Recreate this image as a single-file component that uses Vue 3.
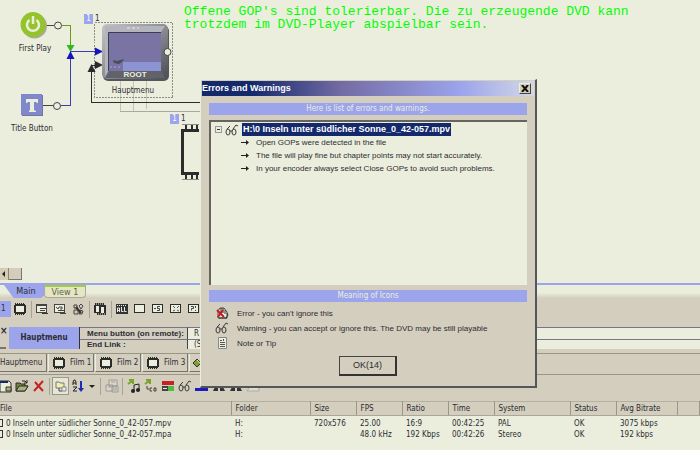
<script setup>
import { ref } from 'vue'

const details = [
  'Open GOPs were detected in the file',
  'The file will play fine but chapter points may not start accurately.',
  'In your encoder always select Close GOPs to avoid such problems.'
]
const legend = [
  { icon: 'error', text: "Error - you can't ignore this" },
  { icon: 'glasses', text: 'Warning - you can accept or ignore this. The DVD may be still playable' },
  { icon: 'note', text: 'Note or Tip' }
]
const menuTools = [
  { icon: 'film', label: 'Movie' }, { sep: true },
  { icon: 'list', label: 'Menu list' }, { icon: 'listp', label: 'Playlist' }, { icon: 'disc', label: 'Disc' }, { sep: true },
  { icon: 'filmgroup', label: 'Group' }, { sep: true },
  { icon: 'all', label: 'All' }, { icon: 'box', label: 'Blank' }, { icon: 'boxs', label: 'Single' },
  { icon: 'boxx', label: 'Cross' }, { icon: 'boxq', label: 'Query' }
]
const films = ['Film 1', 'Film 2', 'Film 3']
const fileTools = [
  { icon: 'new', label: 'New' }, { icon: 'open', label: 'Open' }, { icon: 'delete', label: 'Delete' }, { sep: true },
  { icon: 'tree', label: 'Tree', on: true }, { icon: 'sort', label: 'Sort' }, { icon: 'drop', label: 'Sort options', slim: true }, { sep: true },
  { icon: 'copy', label: 'Copy' }, { sep: true }, { icon: 'audio', label: 'Audio' }, { icon: 'ac3', label: 'Subtitle' },
  { icon: 'bars', label: 'Bars' }, { icon: 'glasses', label: 'Preview' }, { icon: 'blue', label: 'Color' },
  { icon: 'binoc', label: 'Find' }, { icon: 'binoc', label: 'Find next' }, { icon: 'pale', label: 'Properties' }
]
const columns = ['File', 'Folder', 'Size', 'FPS', 'Ratio', 'Time', 'System', 'Status', 'Avg Bitrate', '']
const files = [
  ['0 Inseln unter südlicher Sonne_0_42-057.mpv', 'H:', '720x576', '25.00', '16:9', '00:42:25', 'PAL', 'OK', '3075 kbps', ''],
  ['0 Inseln unter südlicher Sonne_0_42-057.mpa', 'H:', '', '48.0 kHz', '192 Kbps', '00:42:26', 'Stereo', 'OK', '192 kbps', '']
]
const remote = ref('R')
const endLink = ref('(S')
</script>

<template>
  <div class="app">
    <svg class="sprite" aria-hidden="true">
      <symbol id="film" viewBox="0 0 14 14"><path d="M2 1h10v2h1v8h-1v2H2v-2H1V3h1z" fill="#2c2c2c"/><rect x="3" y="4" width="8" height="6" fill="#ebeedc"/><path d="M3 1.500h9M3 12.500h9" stroke="#d4cdb4" stroke-dasharray="1 1"/></symbol>
      <symbol id="list" viewBox="0 0 14 14"><rect x="1.500" y="2.500" width="10" height="8" fill="#ebeedc" stroke="#444"/><path d="M2 3.500h9M5 6.500h6M5 8.500h5" stroke="#444"/><path d="M7 11.500h6" stroke="#333"/></symbol>
      <symbol id="listp" viewBox="0 0 14 14"><rect x="1.500" y="2.500" width="10" height="8" fill="#ebeedc" stroke="#444"/><path d="M3 5l2 2 1-2h3v2H7M5 8.500h7M7 11.500h6" fill="none" stroke="#444"/></symbol>
      <symbol id="disc" viewBox="0 0 14 14"><path d="M3 3h3v3H3zM8 4l2-2 2 2-2 3zM3 8h4v4H3zM9 8l3 1-1 3H8z" fill="#d4cdb4" stroke="#444"/><path d="M5 5l5 6" stroke="#333" stroke-width="2"/></symbol>
      <symbol id="filmgroup" viewBox="0 0 14 14"><path d="M2 1h9v2h2v10H4v-2H1V3h1z" fill="#2c2c2c"/><path d="M3 4h3v6H3zM8 5h3v6H8z" fill="#ebeedc"/><path d="M3 2h8M5 12h8" stroke="#ebeedc" stroke-dasharray="1 1"/></symbol>
      <symbol id="all" viewBox="0 0 14 14"><path d="M1 2h12v10H1z" fill="#333"/><path d="M2.500 10V6h2v4M3 8.500h2M6.500 5v4.500h2M9.500 5v4.500h2" fill="none" stroke="#ebeedc"/><path d="M2 3.500h10" stroke="#ebeedc" stroke-dasharray="1 1"/></symbol>
      <symbol id="box" viewBox="0 0 14 14"><rect x="1.500" y="2.500" width="10" height="8" fill="#ebeedc" stroke="#2c2c2c"/></symbol>
      <symbol id="boxs" viewBox="0 0 14 14"><use href="#box"/><path d="M3 6.500h2M9 4.500H6.500v2h2v2H6" fill="none" stroke="#444"/></symbol>
      <symbol id="boxx" viewBox="0 0 14 14"><use href="#box"/><path d="M4 4l2 2M10 4L8 6M4 9l2-1M10 9L8 8" stroke="#555"/></symbol>
      <symbol id="boxq" viewBox="0 0 14 14"><use href="#box"/><path d="M4 4.500h2.500v2h-2v2M8.500 4v2M8.500 8v1" fill="none" stroke="#444"/></symbol>
      <symbol id="new" viewBox="0 0 14 14"><path d="M1 2h9l2 2v9H1z" fill="#ebeedc" stroke="#333"/><path d="M1 3h8" stroke="#14286c" stroke-width="2"/><path d="M7 8h5v4H7z" fill="#b5ad72" stroke="#333"/></symbol>
      <symbol id="open" viewBox="0 0 14 14"><path d="M1 12V4h4l1 1h4v2h3l-3 5z" fill="#6f8740" stroke="#2c2c2c"/><path d="M1 12l3-5h9l-3 5z" fill="#a9b574" stroke="#2c2c2c"/><path d="M7 2h3l2 2M12 1v3h-3" fill="none" stroke="#222"/></symbol>
      <symbol id="delete" viewBox="0 0 14 14"><path d="M3 3l8 9M11 2L2 12" stroke="#c42424" stroke-width="2"/></symbol>
      <symbol id="tree" viewBox="0 0 14 14"><path d="M2 3h3l1 1h4v5H2z" fill="#f1efad" stroke="#777"/><path d="M5 9v3h3" fill="none" stroke="#444"/><path d="M8 8h4v4H8z" fill="#ebeedc" stroke="#888"/></symbol>
      <symbol id="sort" viewBox="0 0 14 14"><path d="M2 6V3l1-2h1l1 2v3M2 4h3M2 8h4l-4 4h4" fill="none" stroke="#222"/><path d="M10 2v8" stroke="#1c2cb4" stroke-width="2"/><path d="M7 9h6l-3 4z" fill="#1c2cb4"/></symbol>
      <symbol id="drop" viewBox="0 0 14 14"><path d="M4 6h6l-3 3z" fill="#222"/></symbol>
      <symbol id="copy" viewBox="0 0 14 14"><path d="M4 1h8v6H4zM1 6h7v6H1zM7 7h6v6H7z" fill="#dcd8c8" stroke="#999"/><path d="M6 3h4M3 8h3M9 9h3M9 11h3" stroke="#999"/></symbol>
      <symbol id="audio" viewBox="0 0 14 14"><path d="M1 5l4-3M2 1h4v4" fill="none" stroke="#7ca42c" stroke-width="2"/><path d="M7 12V6l5-1v6" fill="none" stroke="#222"/><circle cx="6" cy="12" r="2" fill="#222"/><circle cx="11" cy="11" r="2" fill="#222"/></symbol>
      <symbol id="ac3" viewBox="0 0 14 14"><path d="M1 5l4-3M2 1h4v4" fill="none" stroke="#7ca42c" stroke-width="2"/><path d="M3 7v3h2M8 9H6v3h2M10 9v3h2V9z" fill="none" stroke="#444"/></symbol>
      <symbol id="bars" viewBox="0 0 14 14"><path d="M1 2h12v4H1z" fill="#c42424"/><path d="M1 7h6v5H1z" fill="#444"/><path d="M7 7h6v5H7z" fill="#4cbc3c"/><path d="M2 9.500h4" stroke="#ebeedc"/></symbol>
      <symbol id="glasses" viewBox="0 0 14 14"><g fill="none" stroke="#3c3c3c"><ellipse cx="3" cy="9" rx="2" ry="3"/><ellipse cx="9" cy="9" rx="2" ry="3"/><path d="M5 8h2M2 6l3-3M8 6l3-4 2 1"/></g></symbol>
      <symbol id="blue" viewBox="0 0 14 14"><path d="M0 9h13v3H0z" fill="#1c1cbc"/></symbol>
      <symbol id="binoc" viewBox="0 0 14 14"><path d="M3 8h3v4H1zM8 8h3l2 4H8z" fill="#333"/></symbol>
      <symbol id="pale" viewBox="0 0 14 14"><path d="M4 7h9v5H1z" fill="#dddcca" stroke="#aaa"/></symbol>
      <symbol id="error" viewBox="0 0 14 14"><path d="M3 12V5l2-3h4l3 4v6z" fill="#ebeedc" stroke="#444"/><path d="M6 2v5M8 2v5M10 4v4M4 12h8M12 7l1 2-2 3" fill="none" stroke="#333"/><path d="M2 4l7 7M8 4L3 11" stroke="#c41c24" stroke-width="2"/></symbol>
      <symbol id="note" viewBox="0 0 14 14"><path d="M3.500 1.500h8v11h-8z" fill="#ebeedc" stroke="#888"/><path d="M5 4.500h2M8.500 3v2M5 6.500h5M5 8.500h5M5 10.500h5" stroke="#555"/></symbol>
      <symbol id="diamond" viewBox="0 0 14 14"><path d="M7 3l4 4-4 4-4-4z" fill="#7ca42c" stroke="#333"/><path d="M7 4l3 3" stroke="#d4e89c"/></symbol>
    </svg>

    <main class="canvas">
      <svg class="wires" width="200" height="190" viewBox="0 0 200 190" aria-hidden="true">
        <defs>
          <linearGradient id="metal" x1="0" y1="0" x2="1" y2="1"><stop offset="0" stop-color="#c4c4c8"/><stop offset=".5" stop-color="#8c8c94"/><stop offset="1" stop-color="#4c4c54"/></linearGradient>
        </defs>
        <g fill="none" shape-rendering="crispEdges">
          <path d="M120.500 80V111.500H200M133.500 80v31M146.500 80v29" stroke="#c9c2ae"/>
          <path d="M120 111.500h80" stroke="#aaa8a0"/>
          <rect x="94.500" y="22.500" width="78" height="75" stroke="#8c8c80" stroke-dasharray="2 1"/>
          <path d="M200 102.500H91.500V65.500H96" stroke="#2c2c2c"/>
          <path d="M46 25.500h8M43 105.500h10" stroke="#444"/>
          <path d="M62 25.500h8.500V46" stroke="#6c9c14"/>
          <path d="M61 105.500h9.500V52.500M70 51.500h26" stroke="#3c3cb4"/>
        </g>
        <path d="M66.500 45h8L70.500 52z" fill="#2cbc1c"/>
        <path d="M66.500 59h8L70.500 51z" fill="#1414c4"/>
        <path d="M95 47.500v8l8-4z" fill="#1414c4"/>
        <path d="M87.500 72h8L91.500 64zM95 61v8l8-4z" fill="#2c2c2c"/>
        <circle cx="34.500" cy="26" r="12.500" fill="#aaa996"/>
        <circle cx="33" cy="24.500" r="12.500" fill="#94c42c"/>
        <path d="M29.500 20a6 6 0 1 0 7 0M33 16v8" fill="none" stroke="#ebeedc" stroke-width="2.500"/>
        <rect x="22" y="95" width="21" height="21" fill="#74749c"/>
        <rect x="21" y="94" width="21" height="21" fill="#8088cc"/>
        <path d="M26 99h12v4h-1l-1-1h-2v8l2 1v1h-7v-1l1-1v-8h-2l-1 1h-1z" fill="#ebeedc"/>
        <rect x="103" y="26" width="66" height="55" rx="5" fill="#55555c"/>
        <rect x="102" y="24" width="66" height="55" rx="5" fill="url(#metal)"/>
        <path d="M105 26h60l-4 6h-53zM105 26l3 6v39l-3 6z" fill="#b4b4bc"/>
        <path d="M105 78l4-7h52l4 7z" fill="#62626a"/>
        <path d="M127 28h12" stroke="#ebeedc" stroke-dasharray="3 2"/>
        <rect x="108" y="32" width="53" height="39" fill="#7a74a4"/>
        <path d="M123 62h38v9h-38z" fill="#8c94d4"/>
        <path d="M108.500 71V32.500H161" fill="none" stroke="#3c3c4c"/>
        <path d="M113 60l4 1 7-2-2 3-3 2-5-1z" fill="#4c4c5c"/>
        <path d="M110 67h12" stroke="#9ca4ec" stroke-dasharray="2 2"/>
        <g fill="#ebeedc" stroke="#444" stroke-width="1"><circle cx="58" cy="25.500" r="3.500"/><circle cx="57" cy="106" r="3.500"/><circle cx="167.500" cy="52" r="3.500"/></g>
        <path d="M181 129h18v3h-15v40h15v3h-18z" fill="#2c2c2c"/>
        <path d="M182 124.500h17M182 179.500h17" stroke="#8c8c80"/>
        <path d="M186 125v4M192 125v4M197 125v4M186 175v4M192 175v4M197 175v4" stroke="#2c2c2c" stroke-width="2"/>
      </svg>
      <span class="badge badge-a">1</span><span class="count count-a">1</span>
      <span class="badge badge-b">1</span><span class="count count-b">1</span>
      <span class="node node-play">First Play</span>
      <span class="node node-title">Title Button</span>
      <span class="node node-menu">Hauptmenu</span>
      <span class="node node-root">ROOT</span>
      <p class="remark">Offene GOP's sind tolerierbar. Die zu erzeugende DVD kann<br>trotzdem im DVD-Player abspielbar sein.</p>
      <div class="scroll"><button class="scroll-left" aria-label="Scroll left"></button><button class="thumb" aria-label="Scroll thumb"></button></div>
    </main>

    <nav class="views">
      <button class="view current">Main</button><button class="view other">View 1</button>
    </nav>

    <div class="tools menu-tools">
      <span class="page">1</span>
      <template v-for="(t, i) in menuTools" :key="i">
        <i v-if="t.sep" class="sep"></i>
        <button v-else class="tool" :aria-label="t.label"><svg class="icon"><use :href="'#' + t.icon"/></svg></button>
      </template>
    </div>

    <section class="props">
      <div class="grip"><button class="close-mini" aria-label="Close panel">×</button><i></i></div>
      <strong class="props-name">Hauptmenu</strong>
      <div class="fields">
        <label for="remote">Menu button (on remote):</label><input id="remote" v-model="remote">
        <label for="endlink">End Link :</label><input id="endlink" v-model="endLink">
      </div>
    </section>

    <nav class="films">
      <button class="film-tab first">Hauptmenu</button>
      <button v-for="f in films" :key="f" class="film-tab"><svg class="icon"><use href="#film"/></svg>{{ f }}</button>
      <button class="film-tab more" aria-label="More"><svg class="icon"><use href="#diamond"/></svg></button>
    </nav>

    <div class="tools file-tools">
      <template v-for="(t, i) in fileTools" :key="i">
        <i v-if="t.sep" class="sep"></i>
        <button v-else class="tool" :class="{ on: t.on, slim: t.slim }" :aria-label="t.label"><svg class="icon"><use :href="'#' + t.icon"/></svg></button>
      </template>
    </div>

    <table class="files">
      <colgroup><col v-for="(c, i) in columns" :key="i" :class="'c' + i"></colgroup>
      <thead><tr><th v-for="(c, i) in columns" :key="i">{{ c }}</th></tr></thead>
      <tbody>
        <tr v-for="(row, r) in files" :key="r">
          <td v-for="(cell, i) in row" :key="i"><i v-if="i === 0" class="file-mark"></i>{{ cell }}</td>
        </tr>
      </tbody>
    </table>

    <div class="dialog" role="dialog" aria-labelledby="dialog-title">
      <header class="title"><h1 id="dialog-title">Errors and Warnings</h1><button class="close" aria-label="Close"><svg width="8" height="7" viewBox="0 0 8 7"><path d="M1 0l6 7M7 0L1 7" stroke="#111" stroke-width="2"/></svg></button></header>
      <div class="body">
        <h2 class="band">Here is list of errors and warnings.</h2>
        <div class="list">
          <div class="file-line"><button class="minus" aria-label="Collapse"></button><svg class="icon"><use href="#glasses"/></svg><strong>H:\0 Inseln unter südlicher Sonne_0_42-057.mpv</strong></div>
          <ul>
            <li v-for="d in details" :key="d"><svg class="arrow" width="8" height="7" viewBox="0 0 8 7"><path d="M0 3.500h6" stroke="#222"/><path d="M5 1l3 2.500L5 6z" fill="#222"/></svg>{{ d }}</li>
          </ul>
        </div>
        <h2 class="band">Meaning of Icons</h2>
        <ul class="legend">
          <li v-for="l in legend" :key="l.icon"><svg class="icon"><use :href="'#' + l.icon"/></svg>{{ l.text }}</li>
        </ul>
        <button class="ok">OK(14)</button>
      </div>
    </div>
  </div>
</template>

<style>
body { margin: 0; background: #ebeedc; }
</style>

<style scoped>
* { box-sizing: border-box; }
.app {
  position: relative;
  min-height: 100vh;
  overflow: hidden;
  background: #ebeedc;
  color: #2c2c34;
  font: 8px/12px "DejaVu Sans Condensed", "DejaVu Sans", sans-serif;
}
button, input { margin: 0; padding: 0; border: 0; background: none; font: inherit; color: inherit; }
h1, h2, p, ul { margin: 0; padding: 0; font-size: inherit; list-style: none; }
.sprite { position: absolute; width: 0; height: 0; }
.icon { width: 14px; height: 14px; flex: none; }

.canvas { position: relative; height: 283px; display: flex; flex-direction: column; justify-content: flex-end; }
.wires { position: absolute; left: 0; top: 0; }
.node, .badge, .count { position: absolute; white-space: nowrap; }
.node { transform: translateX(-50%); }
.node-play { left: 35px; top: 43px; }
.node-title { left: 32px; top: 123px; }
.node-menu { left: 133px; top: 85px; }
.node-root { left: 135px; top: 69px; color: #ebeedc; font-family: "Liberation Sans", sans-serif; font-weight: bold; }
.badge { width: 9px; height: 10px; line-height: 10px; text-align: center; background: #9ca4ec; color: #fff; }
.badge-a { left: 84px; top: 14px; }
.badge-b { left: 170px; top: 114px; }
.count-a { left: 95px; top: 13px; }
.count-b { left: 181px; top: 113px; }
.remark { position: absolute; left: 184px; top: 5px; font: 13px/13px "Liberation Mono", monospace; color: #04fc04; white-space: nowrap; }
.scroll { display: flex; height: 15px; padding-bottom: 3px; }
.scroll-left { width: 9px; background: #d4cdb4; border-right: 1px solid #8c8878; display: flex; align-items: center; }
.scroll-left::before { content: ""; border: 3px solid transparent; border-right-color: #222; border-left: 0; margin-left: 2px; }
.thumb { width: 13px; background: #d4cdbc; border-right: 1px solid #777; border-bottom: 1px solid #777; }

.views { display: flex; height: 15px; padding-left: 4px; border-top: 2px solid #9ca4ec; background: linear-gradient(#ebeedc 60%, #d3cebd); }
.view { height: 13px; line-height: 13px; font-size: 9px; }
.current { width: 40px; padding-left: 4px; background: #9ca4ec; clip-path: polygon(0 0, 100% 0, 100% 85%, 92% 100%, 24% 100%); }
.other { width: 42px; background: #e4e6c4; border: 1px solid #aaa998; border-top: 2px solid #a4cc3c; border-radius: 0 0 4px 4px; line-height: 10px; color: #5c6444; }

.tools { display: flex; align-items: center; background: #d3cebd; overflow: hidden; }
.tool { width: 18px; height: 18px; display: flex; align-items: center; justify-content: center; flex: none; }
.sep { width: 1px; height: 17px; margin: 0 2px; background: #a6a294; flex: none; }
.menu-tools { height: 22px; }
.menu-tools .sep { margin: 0 1px 0 2px; }
.menu-tools .page { flex: none; width: 11px; line-height: 16px; background: #9ca4ec; padding-left: 1px; }

.props { display: flex; height: 33px; padding: 7px 0 4px; background: #d3cebd; }
.grip { width: 9px; display: flex; flex-direction: column; justify-content: space-between; }
.close-mini { width: 6px; height: 8px; line-height: 8px; font-size: 10px; font-weight: bold; }
.grip i { height: 2px; width: 6px; background: #77746c; }
.props-name { width: 70px; line-height: 22px; text-align: center; background: #9ca4ec; }
.fields { flex: 1; display: grid; grid-template-columns: 107px 1fr; grid-template-rows: 12px 10px; border-left: 1px solid #333; }
.fields label, .fields input { min-width: 0; border-top: 1px solid #77748c; line-height: 9px; }
.fields label { padding-left: 7px; font-family: "Liberation Sans", sans-serif; font-weight: bold; white-space: nowrap; }
.fields label:first-child { line-height: 11px; }
.fields input { width: 100%; height: 100%; padding-left: 6px; background: #ebeedc; border-left: 1px solid #444; }

.films { display: flex; gap: 1px; height: 22px; padding-bottom: 2px; background: #d3cebd; border-top: 1px solid #999688; border-bottom: 1px solid #999688; }
.film-tab { display: flex; align-items: center; gap: 4px; width: 46px; padding: 0 4px 0 3px; border-right: 1px solid #77746c; border-bottom: 1px solid #77746c; border-left: 1px solid #ebeedc; white-space: nowrap; }
.film-tab.first { width: 47px; padding: 0; border-left: 0; }
.film-tab.more { padding: 0; }

.file-tools { height: 26px; padding-bottom: 4px; }
.file-tools .tool { width: 17px; }
.file-tools .tool:first-child { width: 13px; justify-content: flex-end; }
.file-tools .on { background: #e6e6d6; border: 1px solid #99968a; }
.file-tools .slim { width: 12px; }

.files { width: 100%; table-layout: fixed; border-collapse: collapse; }
.files th { height: 14px; padding: 0 4px; text-align: left; font-weight: normal; background: #d3cebd; border-right: 1px solid #99968a; border-top: 1px solid #b4b0a2; border-bottom: 1px solid #aaa698; white-space: nowrap; }
.files td { height: 11px; line-height: 11px; padding: 0 4px; white-space: nowrap; }
.files th:first-child { padding-left: 0; }
.files td:first-child { padding-left: 0; }
.files tbody::before { content: ""; display: table-row; height: 2px; }
.file-mark { display: inline-block; width: 3px; height: 8px; margin-right: 3px; border: 1px solid #333; border-left: 0; vertical-align: middle; }
.c0 { width: 231px; }
.c1 { width: 79px; }
.c2, .c3, .c4, .c5 { width: 46px; }
.c6 { width: 76px; }
.c7 { width: 46px; }
.c8 { width: 61px; }

.dialog { position: absolute; left: 200px; top: 79px; width: 337px; padding: 1px; background: #d3cebd; border: 1px solid #ebeedc; border-right: 2px solid #55555c; border-bottom: 2px solid #55555c; font: 8px/13px "Liberation Sans", sans-serif; }
.title { display: flex; align-items: center; justify-content: space-between; height: 15px; padding-right: 3px; background: linear-gradient(90deg, #14286c 15%, #746ca4 42%, #9ca4ec 78%, #d4d8e4); }
.title h1 { font: bold 9px/15px "Liberation Sans", sans-serif; color: #fff; }
.close { width: 12px; height: 11px; display: flex; align-items: center; justify-content: center; background: #d4cdb4; border: 1px solid #ebeedc; border-right-color: #444; border-bottom-color: #444; }
.body { padding: 7px 7px 9px; display: flex; flex-direction: column; }
.band { height: 12px; line-height: 12px; background: #9ca4ec; color: #ebeedc; text-align: center; font-family: "DejaVu Sans Condensed", sans-serif; font-weight: normal; }
.list { height: 165px; margin: 5px 0; padding: 1px 4px; background: #ebeedc; border-top: 2px solid #66645c; border-left: 2px solid #66645c; }
.file-line { display: flex; align-items: center; height: 13px; }
.file-line .icon { margin: 0 3px; }
.file-line strong { padding: 0 1px; background: #14286c; color: #fff; font-size: 9px; white-space: nowrap; }
.minus { width: 7px; height: 7px; border: 1px solid #999; display: flex; align-items: center; justify-content: center; }
.minus::before { content: ""; width: 3px; height: 1px; background: #333; }
.list li { display: flex; align-items: center; gap: 7px; padding-left: 26px; white-space: nowrap; }
.arrow { flex: none; }
.legend { padding: 4px 0 6px 6px; display: grid; gap: 1px; }
.legend li { display: flex; align-items: center; gap: 8px; height: 14px; white-space: nowrap; }
.ok { align-self: center; width: 58px; height: 20px; border: 1px solid #444; border-right: 2px solid #333; border-bottom: 2px solid #333; font-size: 9px; }
</style>
